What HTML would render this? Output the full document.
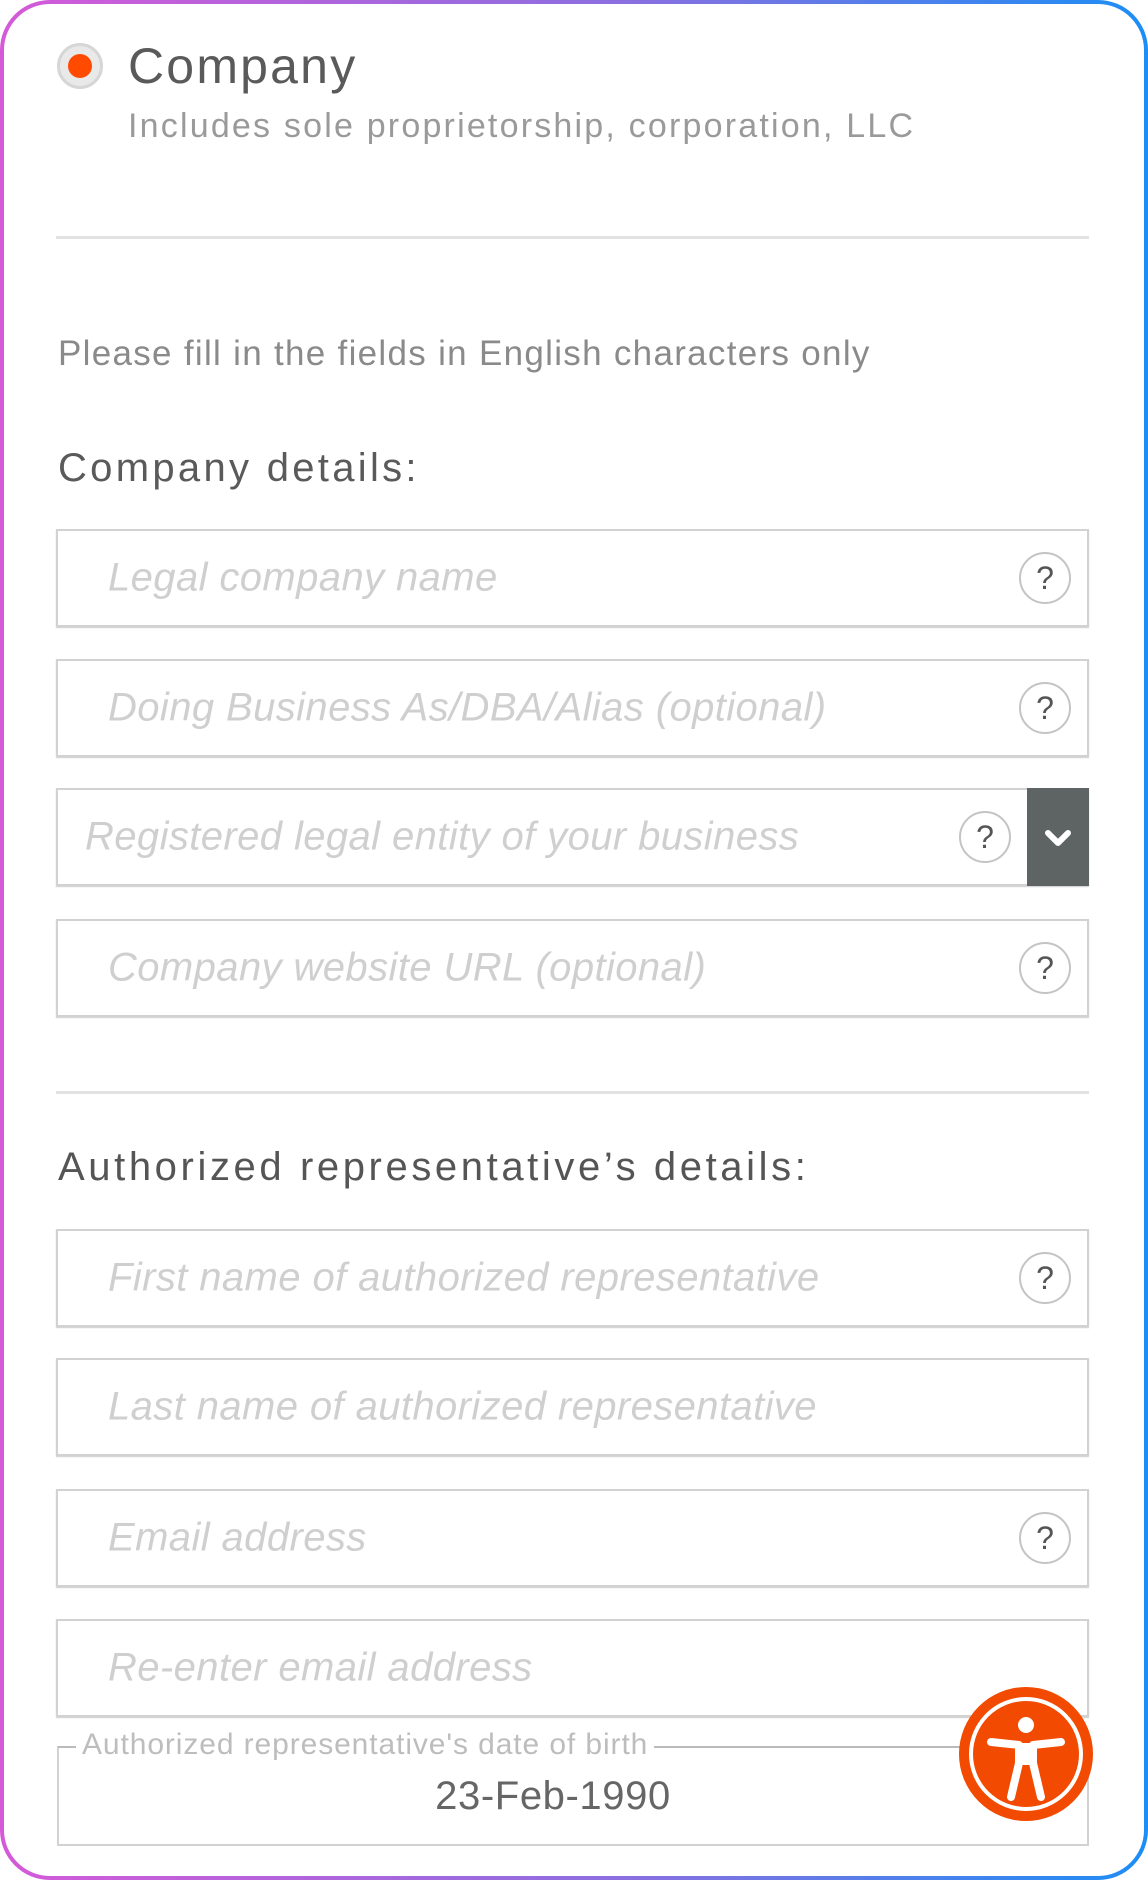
<!DOCTYPE html>
<html><head><meta charset="utf-8"><style>
*{margin:0;padding:0;box-sizing:border-box}
html,body{width:1148px;height:1880px;background:#fff;overflow:hidden}
body{font-family:"Liberation Sans",sans-serif;position:relative}
.frame{position:absolute;left:0;top:0;width:1148px;height:1880px;border-radius:50px;background:linear-gradient(90deg,#d45ad8,#8a6fe0 55%,#1c8ef5);}
.inner{position:absolute;left:4px;top:4px;right:4px;bottom:4px;border-radius:46px;background:#fff;}
.a{position:absolute;white-space:nowrap}
.field{position:absolute;left:56px;width:1033px;height:98px;border:2px solid #d2d2d2;box-shadow:0 1px 1px #ccc}
.ph{position:absolute;left:50px;top:50%;transform:translateY(-50%);font-style:italic;font-size:40px;color:#cfcfcf;letter-spacing:0.4px}
.help{position:absolute;right:16px;top:50%;margin-top:-26px;width:52px;height:52px;border:2px solid #c4c4c4;border-radius:50%;text-align:center;line-height:48px;font-size:32px;color:#555}
.rule{position:absolute;left:56px;width:1033px;height:3px;background:#e2e2e2}
</style></head><body>
<div class="frame"><div class="inner"></div></div>
<div class="a" style="left:57px;top:43px;width:46px;height:46px;border-radius:50%;background:#e9e9e9;border:3px solid #d6d6d6"></div>
<div class="a" style="left:68px;top:54px;width:24px;height:24px;border-radius:50%;background:#ff4a00"></div>
<div class="a" style="left:128px;top:37px;font-size:50px;color:#5a5a5a;letter-spacing:2.2px">Company</div>
<div class="a" style="left:128px;top:107px;font-size:34px;color:#9a9a9a;letter-spacing:2.2px">Includes sole proprietorship, corporation, LLC</div>
<div class="rule" style="top:236px"></div>
<div class="a" style="left:58px;top:334px;font-size:35px;color:#8a8a8a;letter-spacing:1.3px">Please fill in the fields in English characters only</div>
<div class="a" style="left:58px;top:446px;font-size:40px;color:#5a5a5a;letter-spacing:3.3px">Company details:</div>

<div class="field" style="top:529px"><div class="ph">Legal company name</div><div class="help">?</div></div>
<div class="field" style="top:659px"><div class="ph">Doing Business As/DBA/Alias (optional)</div><div class="help">?</div></div>
<div class="field" style="top:788px"><div class="ph" style="left:27px">Registered legal entity of your business</div><div class="help" style="right:76px">?</div>
<div style="position:absolute;right:-2px;top:-2px;width:62px;height:98px;background:#5e6363"><svg width="62" height="98" viewBox="0 0 62 98"><path d="M21 45 L31 55 L41 45" stroke="#fff" stroke-width="6" fill="none" stroke-linecap="round" stroke-linejoin="round"/></svg></div></div>
<div class="field" style="top:919px"><div class="ph">Company website URL (optional)</div><div class="help">?</div></div>

<div class="rule" style="top:1091px"></div>
<div class="a" style="left:58px;top:1145px;font-size:40px;color:#555;letter-spacing:3.6px">Authorized representative’s details:</div>

<div class="field" style="top:1229px"><div class="ph">First name of authorized representative</div><div class="help">?</div></div>
<div class="field" style="top:1358px"><div class="ph">Last name of authorized representative</div></div>
<div class="field" style="top:1489px"><div class="ph">Email address</div><div class="help">?</div></div>
<div class="field" style="top:1619px"><div class="ph">Re-enter email address</div></div>

<div class="a" style="left:57px;top:1746px;width:1032px;height:100px;border:2px solid #d2d2d2;border-top-color:#bbb"></div>
<div class="a" style="left:76px;top:1728px;padding:0 6px;background:#fff;font-size:30px;color:#bdbdbd;letter-spacing:0.9px">Authorized representative's date of birth</div>
<div class="a" style="left:353px;width:400px;text-align:center;top:1774px;font-size:40px;color:#666;letter-spacing:0.6px">23-Feb-1990</div>

<div class="a" style="left:959px;top:1687px;width:134px;height:134px;border-radius:50%;background:#f24a00"></div>
<div class="a" style="left:969px;top:1697px;width:114px;height:114px;border-radius:50%;border:4px solid #fff"></div>
<svg class="a" style="left:959px;top:1687px" width="134" height="134" viewBox="0 0 134 134">
<circle cx="67" cy="38" r="8" fill="#fff"/>
<path d="M32 55 L60 58 L60 76 L52 110 M102 55 L74 58 L74 76 L82 110 M60 62 L74 62" stroke="#fff" stroke-width="8" fill="none" stroke-linecap="round" stroke-linejoin="round"/>
<rect x="59" y="56" width="16" height="22" fill="#fff"/>
</svg>
</body></html>
